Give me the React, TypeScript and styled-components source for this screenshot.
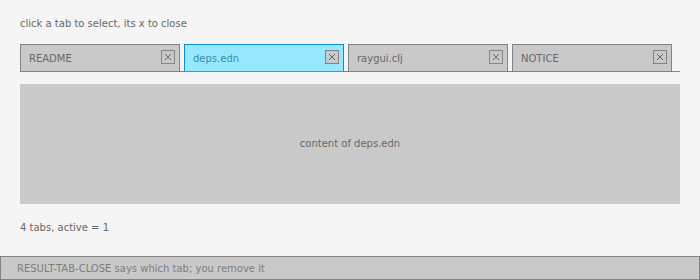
import React, { useState } from 'react';
import styled, { createGlobalStyle, css } from 'styled-components';

const GlobalStyle = createGlobalStyle`
  html, body {
    margin: 0;
    padding: 0;
    background: #f5f5f5;
  }
  body {
    width: 700px;
    height: 280px;
    overflow: hidden;
    font-family: 'DejaVu Sans', 'Liberation Sans', sans-serif;
    font-size: 10px;
    color: #686868;
  }
`;

const Page = styled.div`
  display: flex;
  flex-direction: column;
  width: 700px;
  height: 280px;
`;

const Main = styled.div`
  flex: 1;
  display: flex;
  flex-direction: column;
  padding: 18px 20px 0 20px;
`;

const Hint = styled.div`
  height: 12px;
  line-height: 12px;
`;

const TabBar = styled.div`
  display: flex;
  gap: 4px;
  margin-top: 14px;
  border-bottom: 1px solid #838383;
  height: 27px;
`;

const Tab = styled.div<{ active?: boolean }>`
  box-sizing: border-box;
  width: 160px;
  height: 27px;
  display: flex;
  align-items: center;
  justify-content: space-between;
  padding: 0 4px 0 8px;
  background: #c9c9c9;
  border: 1px solid #838383;
  border-bottom: none;
  cursor: pointer;

  ${({ active }) =>
    active &&
    css`
      background: #97e8ff;
      border-color: #0492c7;
      color: #368baf;
    `}
`;

const TabLabel = styled.span`
  margin-top: 1px;
`;

const CloseBox = styled.div`
  box-sizing: border-box;
  width: 14px;
  height: 14px;
  margin-bottom: 3px;
  border: 1px solid #838383;
  display: flex;
  align-items: center;
  justify-content: center;
  background: #c9c9c9;
`;

const Panel = styled.div`
  margin-top: 12px;
  height: 120px;
  background: #c9c9c9;
  display: flex;
  align-items: center;
  justify-content: center;
  padding-bottom: 2px;
  box-sizing: border-box;
`;

const Count = styled.div`
  margin-top: 18px;
  line-height: 12px;
`;

const StatusBar = styled.div`
  box-sizing: border-box;
  height: 24px;
  border: 1px solid #838383;
  background: #c9c9c9;
  display: flex;
  align-items: center;
  padding-left: 16px;
  color: #7d7d7d;
`;

const Cross = () => (
  <svg width="8" height="8" viewBox="0 0 8 8">
    <path d="M1 1L7 7M7 1L1 7" stroke="#686868" strokeWidth="1" />
  </svg>
);

export default function App() {
  const [tabs, setTabs] = useState(['README', 'deps.edn', 'raygui.clj', 'NOTICE']);
  const [active, setActive] = useState(1);

  return (
    <Page>
      <GlobalStyle />
      <Main>
        <Hint>click a tab to select, its x to close</Hint>
        <TabBar>
          {tabs.map((t, i) => (
            <Tab key={t} active={i === active} onClick={() => setActive(i)}>
              <TabLabel>{t}</TabLabel>
              <CloseBox
                onClick={(e) => {
                  e.stopPropagation();
                  setTabs(tabs.filter((_, j) => j !== i));
                }}
              >
                <Cross />
              </CloseBox>
            </Tab>
          ))}
        </TabBar>
        <Panel>content of {tabs[active]}</Panel>
        <Count>
          {tabs.length} tabs, active = {active}
        </Count>
      </Main>
      <StatusBar>RESULT-TAB-CLOSE says which tab; you remove it</StatusBar>
    </Page>
  );
}
